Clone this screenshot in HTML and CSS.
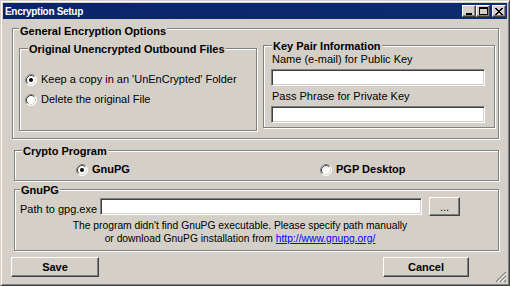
FILE: index.html
```html
<!DOCTYPE html>
<html>
<head>
<meta charset="utf-8">
<link rel="stylesheet" href="styles.css">
</head>
<body>
<div class="window">
  <div class="titlebar">
    <span class="title">Encryption Setup</span>
    <div class="tb-buttons">
      <span class="tb-btn"><svg width="8" height="7" viewBox="0 0 8 7"><rect x="1" y="5" width="6" height="2" fill="#000"/></svg></span>
      <span class="tb-btn"><svg width="9" height="8" viewBox="0 0 9 8"><rect x="0.5" y="0.5" width="8" height="7" fill="none" stroke="#000"/><rect x="0" y="1" width="9" height="1" fill="#000"/></svg></span>
      <span class="tb-btn close"><svg width="8" height="7" viewBox="0 0 8 7" shape-rendering="crispEdges"><path d="M0 0h2v1h-2zM1 1h2v1h-2zM2 2h2v1h-2zM3 3h2v1h-2zM2 4h2v1h-2zM1 5h2v1h-2zM0 6h2v1h-2zM6 0h2v1h-2zM5 1h2v1h-2zM4 2h2v1h-2zM4 4h2v1h-2zM5 5h2v1h-2zM6 6h2v1h-2z" fill="#000"/></svg></span>
    </div>
  </div>
  <div class="body">
    <div class="group general">
      <div class="legend legend-general">General Encryption Options</div>
      <div class="general-row">
        <div class="group original">
          <div class="legend legend-original">Original Unencrypted Outbound Files</div>
          <div class="radio-row row-keep">
            <svg class="radio" width="12" height="12" viewBox="0 0 12 12"><circle cx="6" cy="6" r="5.5" fill="#fff"/><path d="M2.11 9.89A5.5 5.5 0 0 1 9.89 2.11" fill="none" stroke="#808080"/><path d="M9.89 2.11A5.5 5.5 0 0 1 2.11 9.89" fill="none" stroke="#fff"/><path d="M2.82 9.18A4.5 4.5 0 0 1 9.18 2.82" fill="none" stroke="#404040"/><path d="M9.18 2.82A4.5 4.5 0 0 1 2.82 9.18" fill="none" stroke="#d4d0c8"/><circle cx="6" cy="6" r="2" fill="#000"/></svg>
            <span>Keep a copy in an 'UnEnCrypted' Folder</span>
          </div>
          <div class="radio-row row-delete">
            <svg class="radio" width="12" height="12" viewBox="0 0 12 12"><circle cx="6" cy="6" r="5.5" fill="#fff"/><path d="M2.11 9.89A5.5 5.5 0 0 1 9.89 2.11" fill="none" stroke="#808080"/><path d="M9.89 2.11A5.5 5.5 0 0 1 2.11 9.89" fill="none" stroke="#fff"/><path d="M2.82 9.18A4.5 4.5 0 0 1 9.18 2.82" fill="none" stroke="#404040"/><path d="M9.18 2.82A4.5 4.5 0 0 1 2.82 9.18" fill="none" stroke="#d4d0c8"/></svg>
            <span>Delete the original File</span>
          </div>
        </div>
        <div class="group keypair">
          <div class="legend legend-keypair">Key Pair Information</div>
          <div class="field-label">Name (e-mail) for Public Key</div>
          <div class="textbox key-input1"></div>
          <div class="field-label label2">Pass Phrase for Private Key</div>
          <div class="textbox key-input2"></div>
        </div>
      </div>
    </div>

    <div class="group crypto">
      <div class="legend legend-crypto">Crypto Program</div>
      <div class="crypto-row">
        <div class="radio-row bold opt-gnupg">
          <svg class="radio" width="12" height="12" viewBox="0 0 12 12"><circle cx="6" cy="6" r="5.5" fill="#fff"/><path d="M2.11 9.89A5.5 5.5 0 0 1 9.89 2.11" fill="none" stroke="#808080"/><path d="M9.89 2.11A5.5 5.5 0 0 1 2.11 9.89" fill="none" stroke="#fff"/><path d="M2.82 9.18A4.5 4.5 0 0 1 9.18 2.82" fill="none" stroke="#404040"/><path d="M9.18 2.82A4.5 4.5 0 0 1 2.82 9.18" fill="none" stroke="#d4d0c8"/><circle cx="6" cy="6" r="2" fill="#000"/></svg>
          <span>GnuPG</span>
        </div>
        <div class="radio-row bold">
          <svg class="radio" width="12" height="12" viewBox="0 0 12 12"><circle cx="6" cy="6" r="5.5" fill="#fff"/><path d="M2.11 9.89A5.5 5.5 0 0 1 9.89 2.11" fill="none" stroke="#808080"/><path d="M9.89 2.11A5.5 5.5 0 0 1 2.11 9.89" fill="none" stroke="#fff"/><path d="M2.82 9.18A4.5 4.5 0 0 1 9.18 2.82" fill="none" stroke="#404040"/><path d="M9.18 2.82A4.5 4.5 0 0 1 2.82 9.18" fill="none" stroke="#d4d0c8"/></svg>
          <span>PGP Desktop</span>
        </div>
      </div>
    </div>

    <div class="group gnupg">
      <div class="legend legend-gnupg">GnuPG</div>
      <div class="path-row">
        <span class="path-label">Path to gpg.exe</span>
        <div class="textbox path-input"></div>
        <div class="btn browse">...</div>
      </div>
      <div class="message">The program didn't find GnuPG executable. Please specify path manually<br>or download GnuPG installation from <span class="link">http://www.gnupg.org/</span></div>
    </div>

    <div class="button-row">
      <div class="btn action save">Save</div>
      <div class="btn action cancel">Cancel</div>
    </div>
  </div>
  <svg class="grip" width="12" height="12" viewBox="0 0 12 12"><path d="M11 1L1 11M11 5L5 11M11 9L9 11" stroke="#808080" stroke-width="1.2"/><path d="M11 2.5L2.5 11M11 6.5L6.5 11" stroke="#fff" stroke-width="1"/></svg>
</div>
</body>
</html>
```
FILE: styles.css
```css
html, body {
  margin: 0;
  padding: 0;
  background: #d4d0c8;
}
body {
  font-family: "Liberation Sans", Arial, sans-serif;
  font-size: 11px;
  color: #000;
}
.window {
  position: relative;
  width: 510px;
  height: 286px;
  box-sizing: border-box;
  background: #d4d0c8;
  border: 1px solid;
  border-color: #d4d0c8 #404040 #404040 #d4d0c8;
  box-shadow: inset 1px 1px 0 #fff, inset -1px -1px 0 #808080;
  padding: 2px;
  display: flex;
  flex-direction: column;
}
.titlebar {
  flex: none;
  height: 16px;
  background: linear-gradient(90deg, #0a246a, #0d2c72);
  color: #fff;
  font-weight: bold;
  display: flex;
  align-items: center;
  justify-content: space-between;
  padding: 0 1px 0 2px;
}
.title {
  font-size: 10px;
  letter-spacing: -0.3px;
  line-height: 13px;
}
.tb-buttons {
  display: flex;
}
.tb-btn {
  width: 14px;
  height: 12px;
  box-sizing: border-box;
  background: #d4d0c8;
  border: 1px solid;
  border-color: #fff #404040 #404040 #fff;
  box-shadow: inset -1px -1px 0 #808080;
  display: flex;
  align-items: center;
  justify-content: center;
}
.tb-btn svg { display: block; }
.tb-btn.close { margin-left: 2px; }

.body {
  flex: 1;
  display: flex;
  flex-direction: column;
  align-items: flex-start;
}
.group {
  box-sizing: border-box;
  border: 1px solid #808080;
  box-shadow: 1px 1px 0 #fff, inset 1px 1px 0 #fff;
  display: flex;
  flex-direction: column;
  align-items: flex-start;
}
.legend {
  font-weight: bold;
  line-height: 13px;
  height: 13px;
  background: #d4d0c8;
  padding: 0 1px;
  margin-top: -6px;
  white-space: nowrap;
}
.general {
  margin: 9px 0 0 9px;
  width: 487px;
  padding-bottom: 7px;
}
.legend-general { margin-top: -4px; margin-left: 6px; }
.general-row {
  display: flex;
  align-items: flex-start;
  margin-top: 7px;
}
.original {
  margin-left: 6px;
  margin-top: 3px;
  width: 238px;
  height: 83px;
}
.legend-original { margin-left: 8px; }
.keypair {
  margin-left: 6px;
  width: 232px;
  height: 83px;
}
.legend-keypair { margin-left: 8px; }

.radio-row {
  display: flex;
  align-items: center;
  height: 13px;
  line-height: 13px;
  white-space: nowrap;
}
.radio-row .radio { display: block; margin-right: 4px; flex: none; }
.row-keep { margin-top: 17px; padding-left: 5px; }
.row-delete { margin-top: 7px; padding-left: 5px; }
.bold { font-weight: bold; }

.field-label {
  line-height: 13px;
  padding-left: 8px;
  white-space: nowrap;
}
.label2 { margin-top: 4px; }
.textbox {
  box-sizing: border-box;
  background: #fff;
  border: 1px solid;
  border-color: #808080 #fff #fff #808080;
  box-shadow: inset 1px 1px 0 #404040, inset -1px -1px 0 #d4d0c8;
  height: 17px;
}
.key-input1 { margin: 3px 0 0 7px; width: 214px; }
.key-input2 { margin: 3px 0 0 7px; width: 214px; }

.crypto {
  margin: 11px 0 0 11px;
  width: 485px;
  height: 31px;
}
.legend-crypto { margin-left: 7px; }
.crypto-row {
  display: flex;
  margin-top: 5px;
  padding-left: 61px;
}
.opt-gnupg { width: 244px; }

.gnupg {
  margin: 8px 0 0 11px;
  width: 485px;
  height: 62px;
}
.legend-gnupg { margin-left: 5px; }
.path-row {
  display: flex;
  align-items: center;
  height: 19px;
  padding-left: 5px;
}
.path-label {
  width: 80px;
  line-height: 13px;
  margin-top: 5px;
  white-space: nowrap;
}
.path-input { width: 322px; }
.btn {
  box-sizing: border-box;
  background: #d4d0c8;
  border: 1px solid;
  border-color: #fff #404040 #404040 #fff;
  box-shadow: inset -1px -1px 0 #808080;
  display: flex;
  align-items: center;
  justify-content: center;
  line-height: 13px;
}
.browse {
  margin-left: 7px;
  width: 31px;
  height: 19px;
  padding-top: 1px;
}
.message {
  align-self: stretch;
  margin-top: 4px;
  font-size: 10.3px;
  line-height: 12.5px;
  text-align: center;
  padding-right: 33px;
  white-space: nowrap;
}
.link {
  color: #0000ff;
  text-decoration: underline;
}
.button-row {
  margin: 6px 0 0 8px;
  width: 458px;
  display: flex;
  justify-content: space-between;
}
.action {
  height: 20px;
  font-weight: bold;
}
.save { width: 88px; }
.cancel { width: 86px; }
.grip {
  position: absolute;
  right: 2px;
  bottom: 2px;
}
```
